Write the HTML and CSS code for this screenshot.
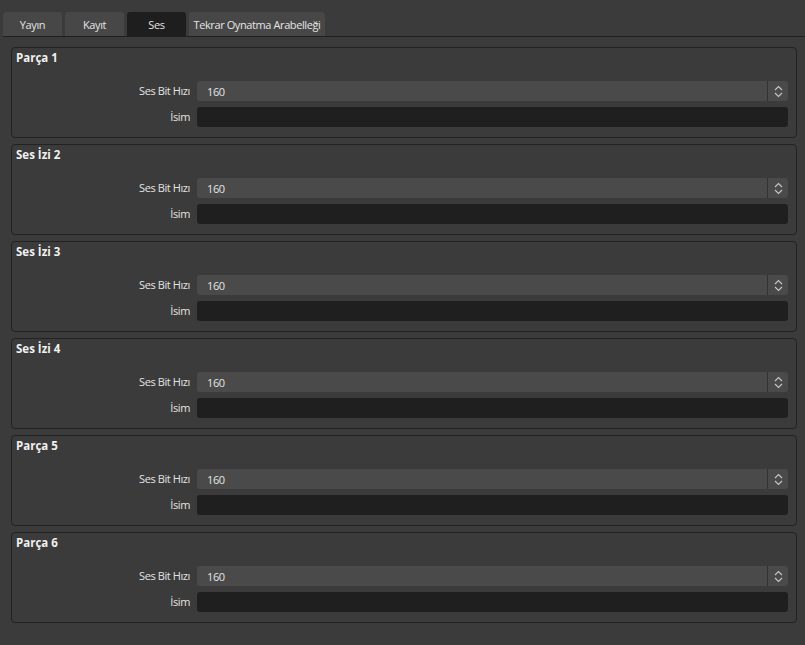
FILE: index.html
```html
<!DOCTYPE html>
<html lang="tr">
<head>
<meta charset="utf-8">
<link rel="stylesheet" href="styles.css">
</head>
<body>
<div class="tabbar">
  <div class="tab">Yayın</div>
  <div class="tab">Kayıt</div>
  <div class="tab active">Ses</div>
  <div class="tab wide">Tekrar Oynatma Arabelleği</div>
</div>
<div class="groups">
  <section class="group">
    <div class="title">Parça 1</div>
    <div class="form">
      <label>Ses Bit Hızı</label>
      <div class="spin"><span class="val">160</span><span class="btns"><svg width="9" height="13" viewBox="0 0 9 13"><path d="M1 5 L4.5 1.5 L8 5 M1 8 L4.5 11.5 L8 8" fill="none" stroke="#c8c8c8" stroke-width="1.1"/></svg></span></div>
      <label>İsim</label>
      <div class="text"></div>
    </div>
  </section>
  <section class="group">
    <div class="title">Ses İzi 2</div>
    <div class="form">
      <label>Ses Bit Hızı</label>
      <div class="spin"><span class="val">160</span><span class="btns"><svg width="9" height="13" viewBox="0 0 9 13"><path d="M1 5 L4.5 1.5 L8 5 M1 8 L4.5 11.5 L8 8" fill="none" stroke="#c8c8c8" stroke-width="1.1"/></svg></span></div>
      <label>İsim</label>
      <div class="text"></div>
    </div>
  </section>
  <section class="group">
    <div class="title">Ses İzi 3</div>
    <div class="form">
      <label>Ses Bit Hızı</label>
      <div class="spin"><span class="val">160</span><span class="btns"><svg width="9" height="13" viewBox="0 0 9 13"><path d="M1 5 L4.5 1.5 L8 5 M1 8 L4.5 11.5 L8 8" fill="none" stroke="#c8c8c8" stroke-width="1.1"/></svg></span></div>
      <label>İsim</label>
      <div class="text"></div>
    </div>
  </section>
  <section class="group">
    <div class="title">Ses İzi 4</div>
    <div class="form">
      <label>Ses Bit Hızı</label>
      <div class="spin"><span class="val">160</span><span class="btns"><svg width="9" height="13" viewBox="0 0 9 13"><path d="M1 5 L4.5 1.5 L8 5 M1 8 L4.5 11.5 L8 8" fill="none" stroke="#c8c8c8" stroke-width="1.1"/></svg></span></div>
      <label>İsim</label>
      <div class="text"></div>
    </div>
  </section>
  <section class="group">
    <div class="title">Parça 5</div>
    <div class="form">
      <label>Ses Bit Hızı</label>
      <div class="spin"><span class="val">160</span><span class="btns"><svg width="9" height="13" viewBox="0 0 9 13"><path d="M1 5 L4.5 1.5 L8 5 M1 8 L4.5 11.5 L8 8" fill="none" stroke="#c8c8c8" stroke-width="1.1"/></svg></span></div>
      <label>İsim</label>
      <div class="text"></div>
    </div>
  </section>
  <section class="group">
    <div class="title">Parça 6</div>
    <div class="form">
      <label>Ses Bit Hızı</label>
      <div class="spin"><span class="val">160</span><span class="btns"><svg width="9" height="13" viewBox="0 0 9 13"><path d="M1 5 L4.5 1.5 L8 5 M1 8 L4.5 11.5 L8 8" fill="none" stroke="#c8c8c8" stroke-width="1.1"/></svg></span></div>
      <label>İsim</label>
      <div class="text"></div>
    </div>
  </section>
</div>
</body>
</html>
```
FILE: styles.css
```css
html, body {
  margin: 0;
  background: #3b3b3b;
  font-family: "Open Sans", "Noto Sans", sans-serif;
  font-size: 11px;
  letter-spacing: -0.4px;
  color: #e4e4e4;
}
.tabbar {
  display: flex;
  gap: 3px;
  padding-top: 12px;
  border-bottom: 1px solid #202020;
  margin-left: 3px;
}
.tab {
  width: 59px;
  height: 24px;
  background: #474747;
  border-radius: 3px 3px 0 0;
  display: flex;
  align-items: center;
  justify-content: center;
  white-space: nowrap;
}
.tab.active { background: #1e1e1e; }
.tab.wide { width: 136px; }
.groups {
  display: flex;
  flex-direction: column;
  gap: 6px;
  margin: 10px 8px 0 11px;
}
.group {
  border: 1px solid #222;
  border-radius: 4px;
  padding: 2px 8px 10px 0;
  box-sizing: border-box;
  height: 91px;
}
.title {
  font-weight: bold;
  font-size: 11.5px;
  letter-spacing: 0;
  padding-left: 4px;
  line-height: 16px;
  height: 16px;
  color: #f0f0f0;
}
.form {
  margin-top: 15px;
  display: grid;
  grid-template-columns: 178px 1fr;
  column-gap: 7px;
  row-gap: 6px;
}
.form label {
  text-align: right;
  line-height: 20px;
  white-space: nowrap;
}
.spin {
  height: 20px;
  background: #4a4a4a;
  border-radius: 3px;
  display: flex;
  align-items: center;
}
.val { flex: 1; padding-left: 10px; }
.btns {
  width: 20px;
  height: 20px;
  border-left: 1px solid #333;
  display: flex;
  align-items: center;
  justify-content: center;
}
.text {
  height: 20px;
  background: #1f1f1f;
  border-radius: 3px;
}
```
